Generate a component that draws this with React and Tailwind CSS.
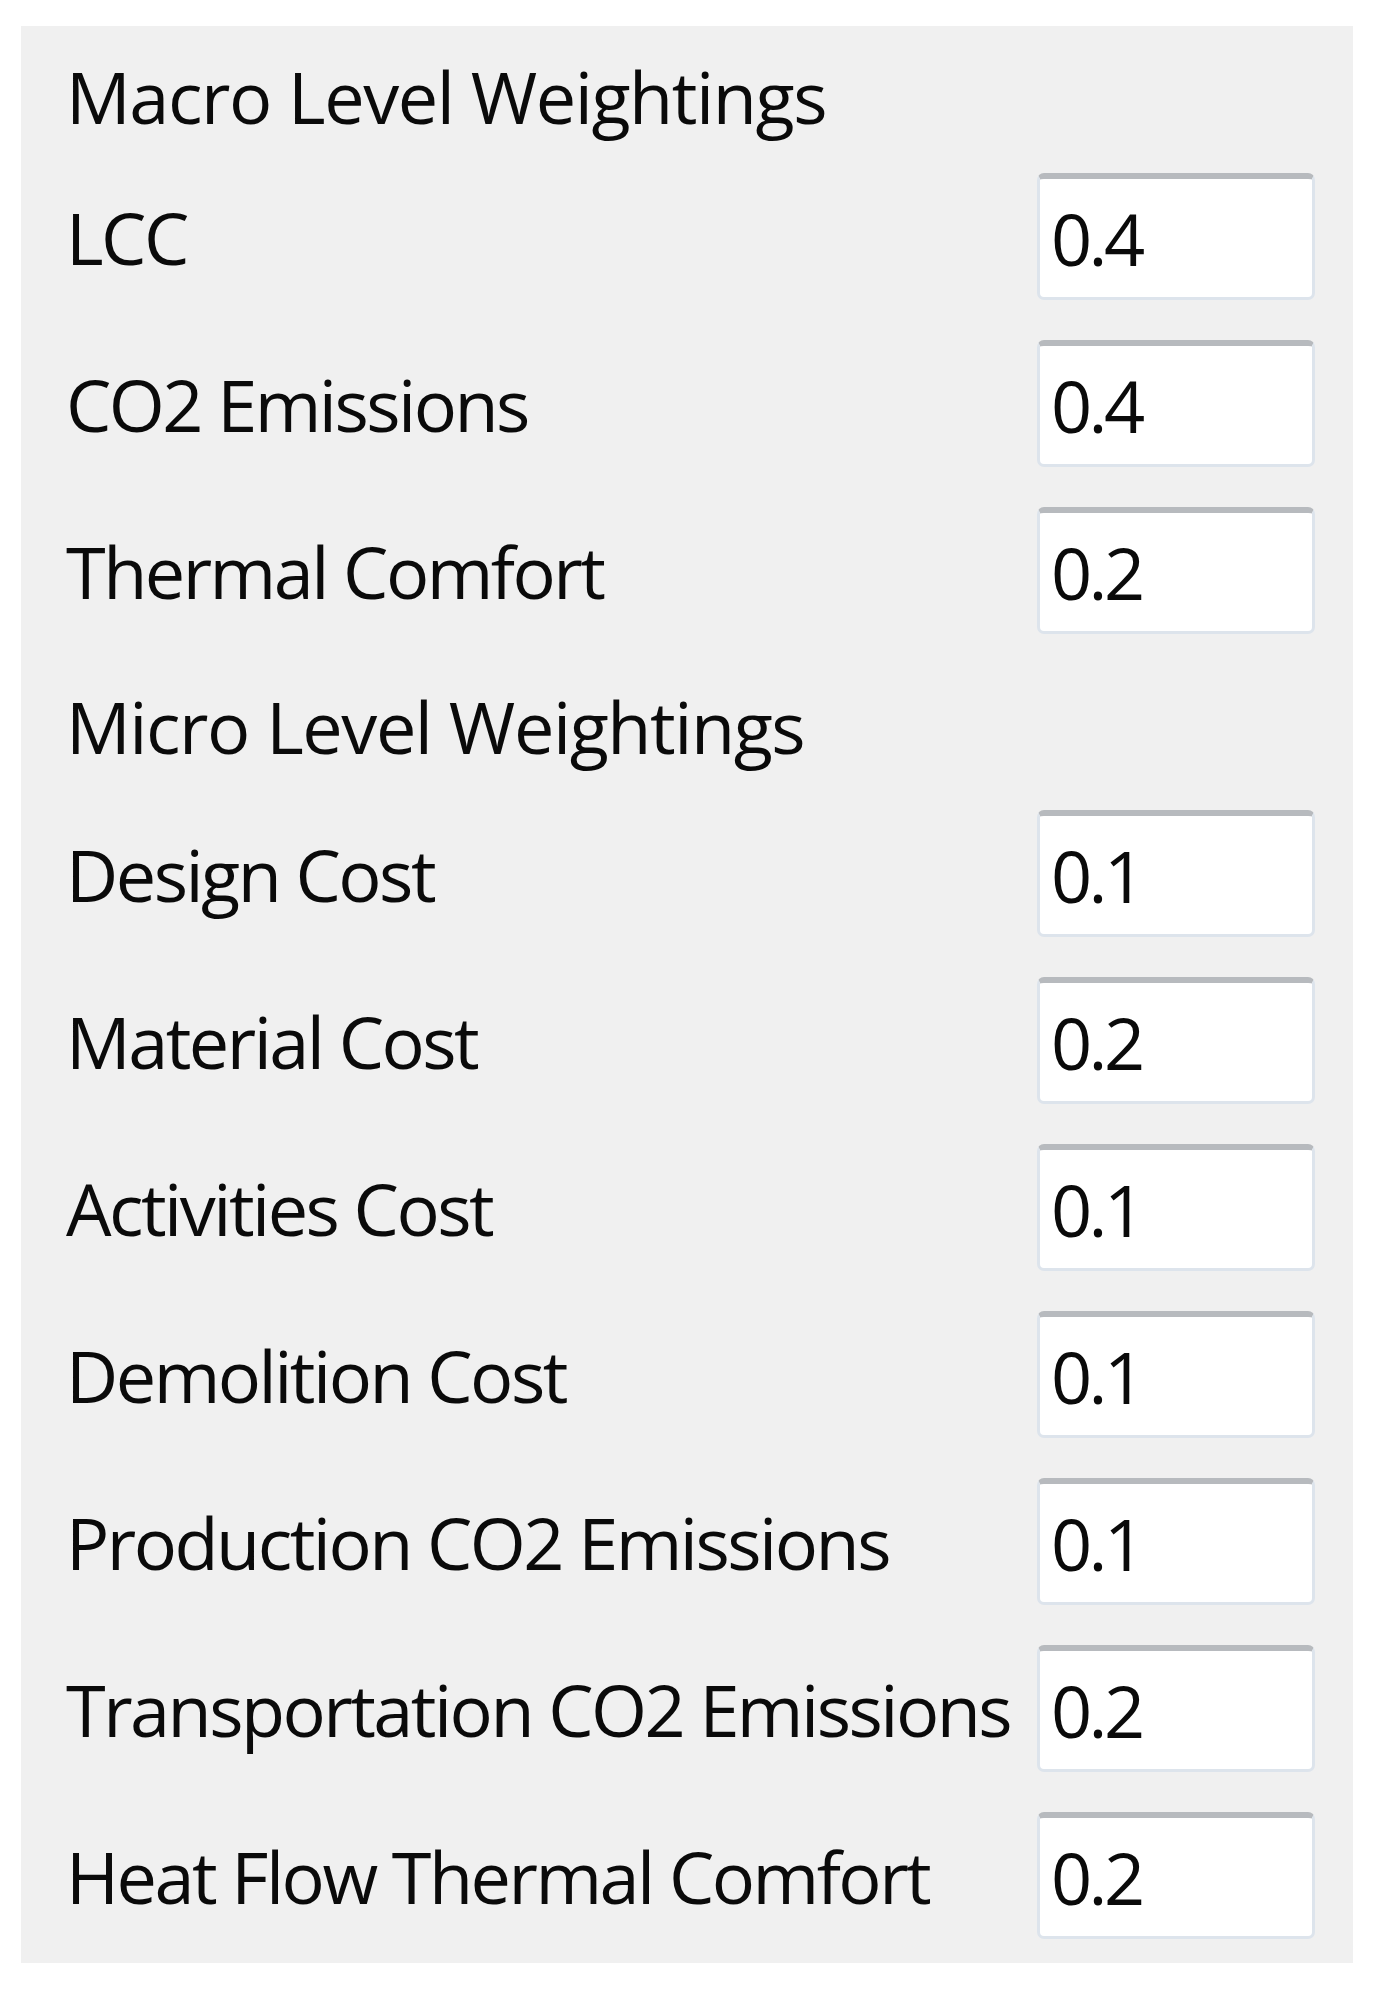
import React from 'react';

const macro = [
  { label: 'LCC', value: '0.4' },
  { label: 'CO2 Emissions', value: '0.4' },
  { label: 'Thermal Comfort', value: '0.2' }
];

const micro = [
  { label: 'Design Cost', value: '0.1' },
  { label: 'Material Cost', value: '0.2' },
  { label: 'Activities Cost', value: '0.1' },
  { label: 'Demolition Cost', value: '0.1' },
  { label: 'Production CO2 Emissions', value: '0.1' },
  { label: 'Transportation CO2 Emissions', value: '0.2' },
  { label: 'Heat Flow Thermal Comfort', value: '0.2' }
];

const font = { fontFamily: '"Open Sans", "Noto Sans", sans-serif' };

const WeightRow = ({ label, value }) => (
  <div className="flex h-[127px] items-center justify-between">
    <span className="min-w-0 whitespace-nowrap text-[72px] font-medium leading-none tracking-[-0.035em] text-[#0a0a0a]">
      {label}
    </span>
    <input
      readOnly
      defaultValue={value}
      className="h-[127px] w-[278px] shrink-0 rounded-[7px] border-x-[3px] border-b-[3px] border-t-[6px] border-[#dde4ec] border-t-[#b7babe] bg-white pl-[11px] text-[72px] font-medium tracking-[-0.05em] text-[#0a0a0a] outline-none"
    />
  </div>
);

const App = () => {
  return (
    <div className="min-h-screen bg-white pl-[21px] pt-[26px]" style={font}>
      <div className="flex h-[1937px] w-[1332px] flex-col bg-[#f0f0f0] pl-[45px] pr-[38px] pt-[22px]">
        <h2 className="flex h-[96px] items-center text-[72px] font-medium tracking-[-0.02em] text-[#0a0a0a]">
          Macro Level Weightings
        </h2>
        <div className="mt-[29px] flex flex-col gap-[40px]">
          {macro.map((row) => (
            <WeightRow key={row.label} {...row} />
          ))}
        </div>
        <h2 className="mt-[44px] flex h-[96px] items-center text-[72px] font-medium tracking-[-0.02em] text-[#0a0a0a]">
          Micro Level Weightings
        </h2>
        <div className="mt-[36px] flex flex-col gap-[40px]">
          {micro.map((row) => (
            <WeightRow key={row.label} {...row} />
          ))}
        </div>
      </div>
    </div>
  );
};

export default App;
